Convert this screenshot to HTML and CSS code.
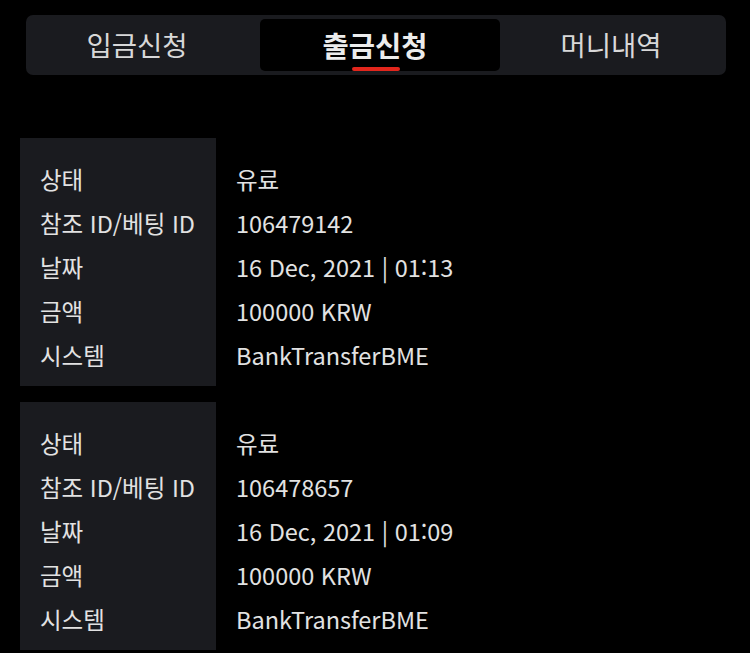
FILE: index.html
```html
<!DOCTYPE html>
<html lang="ko">
<head>
<meta charset="utf-8">
<link rel="stylesheet" href="styles.css">
</head>
<body>
<div class="page">
  <nav class="tabs">
    <div class="tab first">입금신청</div>
    <div class="tab active">출금신청</div>
    <div class="tab">머니내역</div>
  </nav>
  <div class="list">
    <div class="card">
      <div class="labels">
        <div class="row">상태</div>
        <div class="row">참조 ID/베팅 ID</div>
        <div class="row">날짜</div>
        <div class="row">금액</div>
        <div class="row">시스템</div>
      </div>
      <div class="values">
        <div class="row">유료</div>
        <div class="row">106479142</div>
        <div class="row">16 Dec, 2021 | 01:13</div>
        <div class="row">100000 KRW</div>
        <div class="row">BankTransferBME</div>
      </div>
    </div>
    <div class="card">
      <div class="labels">
        <div class="row">상태</div>
        <div class="row">참조 ID/베팅 ID</div>
        <div class="row">날짜</div>
        <div class="row">금액</div>
        <div class="row">시스템</div>
      </div>
      <div class="values">
        <div class="row">유료</div>
        <div class="row">106478657</div>
        <div class="row">16 Dec, 2021 | 01:09</div>
        <div class="row">100000 KRW</div>
        <div class="row">BankTransferBME</div>
      </div>
    </div>
  </div>
</div>
</body>
</html>
```
FILE: styles.css
```css
html, body {
  margin: 0;
  padding: 0;
  background: #000;
}
body {
  font-family: "Noto Sans CJK KR", "Noto Sans", sans-serif;
  color: #e2e2e2;
}
.page {
  width: 750px;
  height: 653px;
  overflow: hidden;
  padding-top: 15px;
  box-sizing: border-box;
}
.tabs {
  margin: 0 24px 0 26px;
  height: 60px;
  box-sizing: border-box;
  padding: 4px;
  background: #1a1b1f;
  border-radius: 7px;
  display: grid;
  grid-template-columns: 230px 240px 1fr;
}
.tab {
  display: flex;
  align-items: center;
  justify-content: center;
  font-size: 27.5px;
  color: #d8d8d8;
  position: relative;
  border-radius: 5px;
  padding-bottom: 2px;
}
.tab.first {
  padding-right: 16px;
}
.tab.active {
  background: #000;
  font-weight: 700;
  font-size: 28.5px;
  color: #ececec;
  padding-right: 10px;
}
.tab.active::after {
  content: "";
  position: absolute;
  left: 92px;
  width: 48px;
  bottom: 0;
  height: 4px;
  border-radius: 2px;
  background: #e2261c;
}
.list {
  margin-top: 63px;
  padding-left: 20px;
  display: flex;
  flex-direction: column;
  gap: 16px;
}
.card {
  display: flex;
  height: 248px;
}
.labels {
  width: 196px;
  background: #1a1b1f;
  box-sizing: border-box;
  padding: 19px 0 0 20px;
}
.values {
  padding: 19px 0 0 20px;
}
.row {
  height: 44px;
  line-height: 44px;
  font-size: 23.5px;
  white-space: nowrap;
}
```
